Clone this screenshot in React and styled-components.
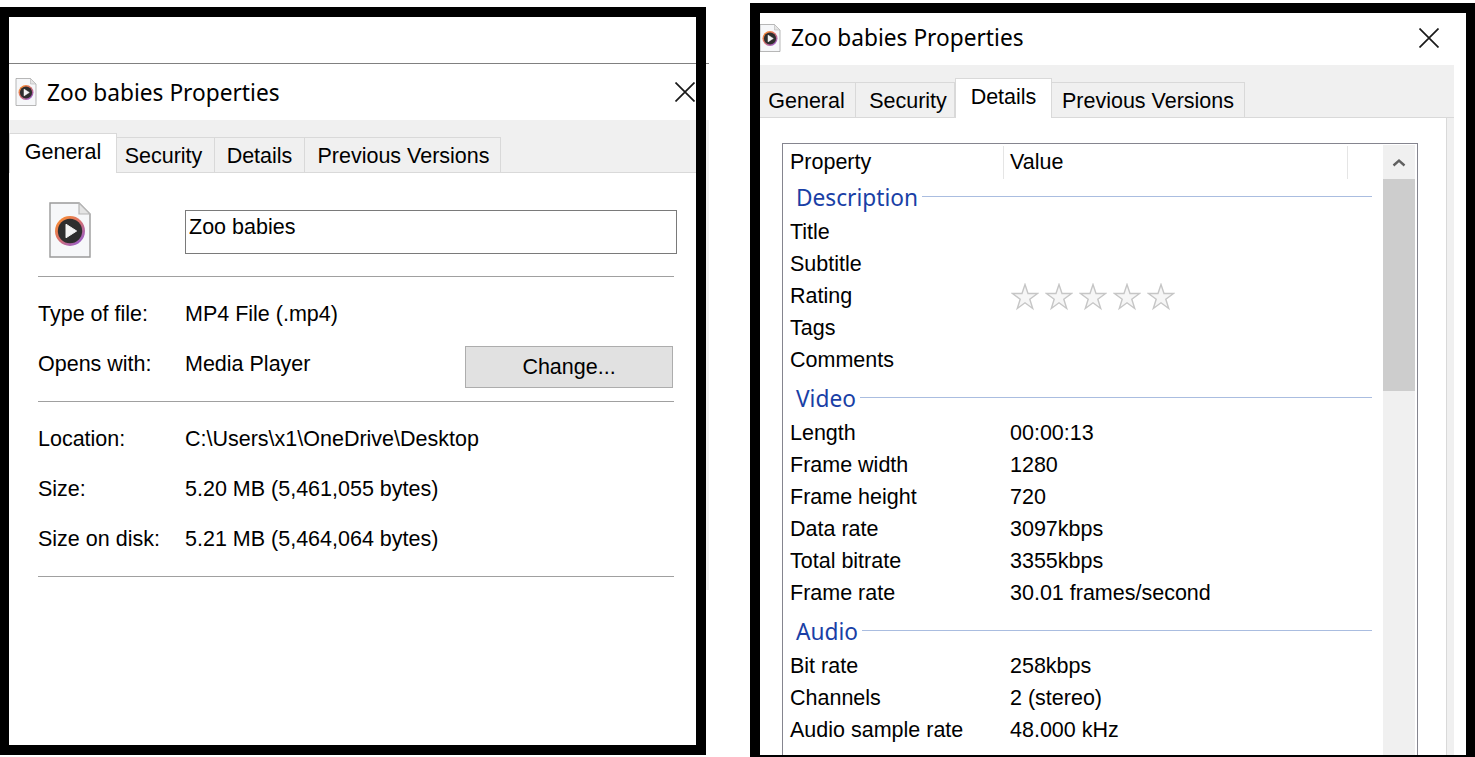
import React from "react";
import styled, { createGlobalStyle } from "styled-components";

const Global = createGlobalStyle`
  html, body { margin: 0; padding: 0; background: #fff; overflow: hidden; }
  #root { width: 1475px; height: 757px; overflow: hidden; }
  * { box-sizing: border-box; }
`;

const Page = styled.div`
  width: 1475px;
  height: 757px;
  display: flex;
  align-items: flex-start;
  font-family: "Liberation Sans", Arial, sans-serif;
  font-size: 21.5px;
  color: #000;
  background: #fff;
`;

const LeftFrame = styled.div`
  position: relative;
  width: 706px;
  height: 748px;
  margin-top: 7px;
  border: solid #000;
  border-width: 10px 10px 10px 9px;
  background: #fff;
  display: flex;
  flex-direction: column;
  &::before {
    content: "";
    position: absolute;
    left: 687px;
    top: 46px;
    width: 13px;
    height: 1px;
    background: #808080;
    clip-path: inset(0 0 0 10px);
  }
  &::after {
    content: "";
    position: absolute;
    left: 697px;
    top: 103px;
    width: 3px;
    height: 470px;
    background: #f0f0f0;
  }
`;

const TopBlank = styled.div`
  height: 47px;
  flex: none;
  border-bottom: 1px solid #808080;
`;

const RightFrame = styled.div`
  width: 725px;
  height: 754px;
  margin: 3px 0 0 44px;
  border: solid #000;
  border-width: 10px 9px 2px 10px;
  background: #fff;
  overflow: hidden;
`;

const RightWindow = styled.div`
  width: 694px;
  height: 100%;
  display: flex;
  flex-direction: column;
`;

const TitleBar = styled.div`
  flex: none;
  height: ${(p) => p.$h}px;
  display: flex;
  align-items: center;
  padding: 0 ${(p) => p.$pr}px ${(p) => p.$pb}px ${(p) => p.$pl}px;
`;

const TitleText = styled.div`
  flex: 1;
  margin-left: 10px;
  padding-top: ${(p) => p.$pt || 0}px;
  font-family: "Noto Sans", "Open Sans", sans-serif;
  font-size: 22.7px;
  line-height: 30px;
  white-space: nowrap;
`;

const Close = styled.svg`
  flex: none;
  width: 20px;
  height: 20px;
`;

const Strip = styled.div`
  flex: none;
  height: 53px;
  background: #f0f0f0;
  border-bottom: 1px solid #d9d9d9;
  display: flex;
  align-items: flex-end;
`;

const Tab = styled.div`
  flex: none;
  width: ${(p) => p.$w}px;
  height: ${(p) => (p.$active ? 40 : 35)}px;
  margin-bottom: ${(p) => (p.$active ? -1 : 0)}px;
  background: ${(p) => (p.$active ? "#fff" : "#f0f0f0")};
  border: 1px solid #d9d9d9;
  border-width: 1px 1px 0 ${(p) => (p.$active ? 1 : 0)}px;
  position: relative;
  display: flex;
  justify-content: center;
  align-items: center;
  padding: ${(p) => (p.$active ? "0 0 3px" : "2px 0 0")};
  padding-left: ${(p) => (p.$nudge > 0 ? p.$nudge * 2 : 0)}px;
  padding-right: ${(p) => (p.$nudge < 0 ? -p.$nudge * 2 : 0)}px;
  white-space: nowrap;
`;

const General = styled.div`
  flex: 1;
  padding: 0 19px 0 29px;
`;

const NameRow = styled.div`
  display: flex;
  align-items: flex-start;
  height: 104px;
  padding: 29px 0 0 11px;
  border-bottom: 1px solid #a0a0a0;
  margin-right: 3px;
`;

const NameInput = styled.div`
  width: 492px;
  height: 44px;
  margin: 8px -3px 0 94px;
  border: 1px solid #7a7a7a;
  padding: 3px 3px;
  line-height: 26px;
`;

const Section = styled.div`
  border-bottom: 1px solid #a0a0a0;
  margin-right: 3px;
  padding: ${(p) => p.$pt}px 0 ${(p) => p.$pb}px;
`;

const InfoRow = styled.div`
  height: 50px;
  display: grid;
  grid-template-columns: 147px 280px 208px;
  align-items: center;
  white-space: nowrap;
`;

const ChangeButton = styled.div`
  height: 42px;
  background: #e1e1e1;
  border: 1px solid #adadad;
  display: flex;
  align-items: center;
  justify-content: center;
  margin-top: 6px;
`;

const Body = styled.div`
  flex: 1;
  min-height: 0;
  background: #f0f0f0;
  padding-right: 7px;
`;

const Panel = styled.div`
  height: 100%;
  background: #fff;
  border-right: 1px solid #d9d9d9;
  padding: 25px 0 0 22px;
`;

const ListBox = styled.div`
  width: 636px;
  height: 100%;
  min-height: 700px;
  border: 1px solid #85858f;
  display: flex;
`;

const ListMain = styled.div`
  width: 600px;
  flex: none;
`;

const HeaderRow = styled.div`
  height: 35px;
  display: grid;
  grid-template-columns: 221px 344px;
  align-items: center;
`;

const HeaderCell = styled.div`
  height: 33px;
  padding-left: ${(p) => p.$pl}px;
  border-right: 1px solid #e5e5e5;
  display: flex;
  align-items: center;
  position: relative;
  top: 1px;
`;

const GroupHead = styled.div`
  height: 37px;
  margin-top: ${(p) => (p.$first ? 0 : 4)}px;
  padding: 0 11px 0 13px;
  display: flex;
  align-items: center;
  gap: 4px;
  color: #1a3fa6;
  font-family: "Noto Sans", "Open Sans", sans-serif;
  font-size: 22.7px;
  &::after {
    content: "";
    flex: 1;
    height: 1px;
    background: #aabde0;
    position: relative;
    top: -1px;
  }
`;

const PropRow = styled.div`
  height: 32px;
  display: grid;
  grid-template-columns: 220px 1fr;
  align-items: center;
  padding: 1px 0 0 7px;
  white-space: nowrap;
`;

const Stars = styled.div`
  display: flex;
  gap: 6px;
  margin-left: 1px;
`;

const StarIcon = styled.svg`
  width: 28px;
  height: 28px;
  flex: none;
`;

const ScrollBar = styled.div`
  width: 32px;
  flex: none;
  background: #f0f0f0;
  margin-top: 1px;
  display: flex;
  flex-direction: column;
`;

const ArrowBox = styled.div`
  height: 34px;
  display: flex;
  align-items: center;
  justify-content: center;
`;

const Thumb = styled.div`
  height: 212px;
  background: #cdcdcd;
`;

function FileIcon({ width, height, id, style }) {
  return (
    <svg width={width} height={height} viewBox="0 0 42 56" style={{ flex: "none", ...style }}>
      <defs>
        <linearGradient id={id} x1="0.15" y1="0.1" x2="0.85" y2="0.9">
          <stop offset="0" stopColor="#f78b35" />
          <stop offset="0.45" stopColor="#d9706a" />
          <stop offset="1" stopColor="#9a5fc8" />
        </linearGradient>
      </defs>
      <path d="M1 1H30L41 12V55H1Z" fill="#f6f7f9" stroke="#9a9a9a" strokeWidth="1.4" />
      <path d="M30 1V12H41Z" fill="#e4e4e4" stroke="#b5b5b5" strokeWidth="1.2" />
      <circle cx="21" cy="29" r="15" fill={`url(#${id})`} />
      <circle cx="21" cy="29" r="12.2" fill="#2e2e2e" />
      <path d="M17 22.2 L27.6 29 L17 35.8Z" fill="#f4f4f4" stroke="#f4f4f4" strokeWidth="1" strokeLinejoin="round" />
    </svg>
  );
}

const CloseIcon = () => (
  <Close viewBox="0 0 20 20">
    <path d="M0.5 0.5L19.5 19.5M19.5 0.5L0.5 19.5" stroke="#1a1a1a" strokeWidth="1.7" fill="none" />
  </Close>
);

const Star = () => (
  <StarIcon viewBox="0 0 28 28">
    <path
      d="M14 1.5L17 10.5H26.5L18.8 16.2L21.7 25.5L14 19.8L6.3 25.5L9.2 16.2L1.5 10.5H11Z"
      fill="#f6f6f6"
      stroke="#c6c6c6"
      strokeWidth="1.4"
    />
  </StarIcon>
);

const groups = [
  {
    name: "Description",
    rows: [["Title"], ["Subtitle"], ["Rating", "stars"], ["Tags"], ["Comments"]],
  },
  {
    name: "Video",
    rows: [
      ["Length", "00:00:13"],
      ["Frame width", "1280"],
      ["Frame height", "720"],
      ["Data rate", "3097kbps"],
      ["Total bitrate", "3355kbps"],
      ["Frame rate", "30.01 frames/second"],
    ],
  },
  {
    name: "Audio",
    rows: [
      ["Bit rate", "258kbps"],
      ["Channels", "2 (stereo)"],
      ["Audio sample rate", "48.000 kHz"],
    ],
  },
];

export default function App() {
  return (
    <Page>
      <Global />
      <LeftFrame>
        <TopBlank />
        <TitleBar $h={56} $pl={6} $pr={1} $pb={0}>
          <FileIcon width={22} height={28} id="g1" />
          <TitleText $pt={2}>Zoo babies Properties</TitleText>
          <CloseIcon />
        </TitleBar>
        <Strip>
          <Tab $w={108} $active>General</Tab>
          <Tab $w={98} $nudge={-2}>Security</Tab>
          <Tab $w={90}>Details</Tab>
          <Tab $w={196} $nudge={1}>Previous Versions</Tab>
        </Strip>
        <General>
          <NameRow>
            <FileIcon width={42} height={56} id="g2" />
            <NameInput>Zoo babies</NameInput>
          </NameRow>
          <Section $pt={12} $pb={12}>
            <InfoRow><span>Type of file:</span><span>MP4 File (.mp4)</span></InfoRow>
            <InfoRow>
              <span>Opens with:</span>
              <span>Media Player</span>
              <ChangeButton>Change...</ChangeButton>
            </InfoRow>
          </Section>
          <Section $pt={12} $pb={12}>
            <InfoRow><span>Location:</span><span>C:\Users\x1\OneDrive\Desktop</span></InfoRow>
            <InfoRow><span>Size:</span><span>5.20 MB (5,461,055 bytes)</span></InfoRow>
            <InfoRow><span>Size on disk:</span><span>5.21 MB (5,464,064 bytes)</span></InfoRow>
          </Section>
        </General>
      </LeftFrame>

      <RightFrame>
        <RightWindow>
          <TitleBar $h={52} $pl={0} $pr={15} $pb={3}>
            <FileIcon width={22} height={28} id="g3" style={{ marginLeft: -1 }} />
            <TitleText>Zoo babies Properties</TitleText>
            <CloseIcon />
          </TitleBar>
          <Strip>
            <Tab $w={96} $nudge={-1}>General</Tab>
            <Tab $w={99} $nudge={3}>Security</Tab>
            <Tab $w={97} $active>Details</Tab>
            <Tab $w={193}>Previous Versions</Tab>
          </Strip>
          <Body>
            <Panel>
              <ListBox>
                <ListMain>
                  <HeaderRow>
                    <HeaderCell $pl={7}>Property</HeaderCell>
                    <HeaderCell $pl={6}>Value</HeaderCell>
                  </HeaderRow>
                  {groups.map((g, i) => (
                    <React.Fragment key={g.name}>
                      <GroupHead $first={i === 0}>{g.name}</GroupHead>
                      {g.rows.map(([k, v]) => (
                        <PropRow key={k}>
                          <span>{k}</span>
                          {v === "stars" ? (
                            <Stars>
                              <Star /><Star /><Star /><Star /><Star />
                            </Stars>
                          ) : (
                            <span>{v}</span>
                          )}
                        </PropRow>
                      ))}
                    </React.Fragment>
                  ))}
                </ListMain>
                <ScrollBar>
                  <ArrowBox>
                    <svg width="14" height="9" viewBox="0 0 14 9">
                      <path d="M1.5 7.5L7 2.5L12.5 7.5" stroke="#606060" strokeWidth="2.4" fill="none" />
                    </svg>
                  </ArrowBox>
                  <Thumb />
                </ScrollBar>
              </ListBox>
            </Panel>
          </Body>
        </RightWindow>
      </RightFrame>
    </Page>
  );
}
